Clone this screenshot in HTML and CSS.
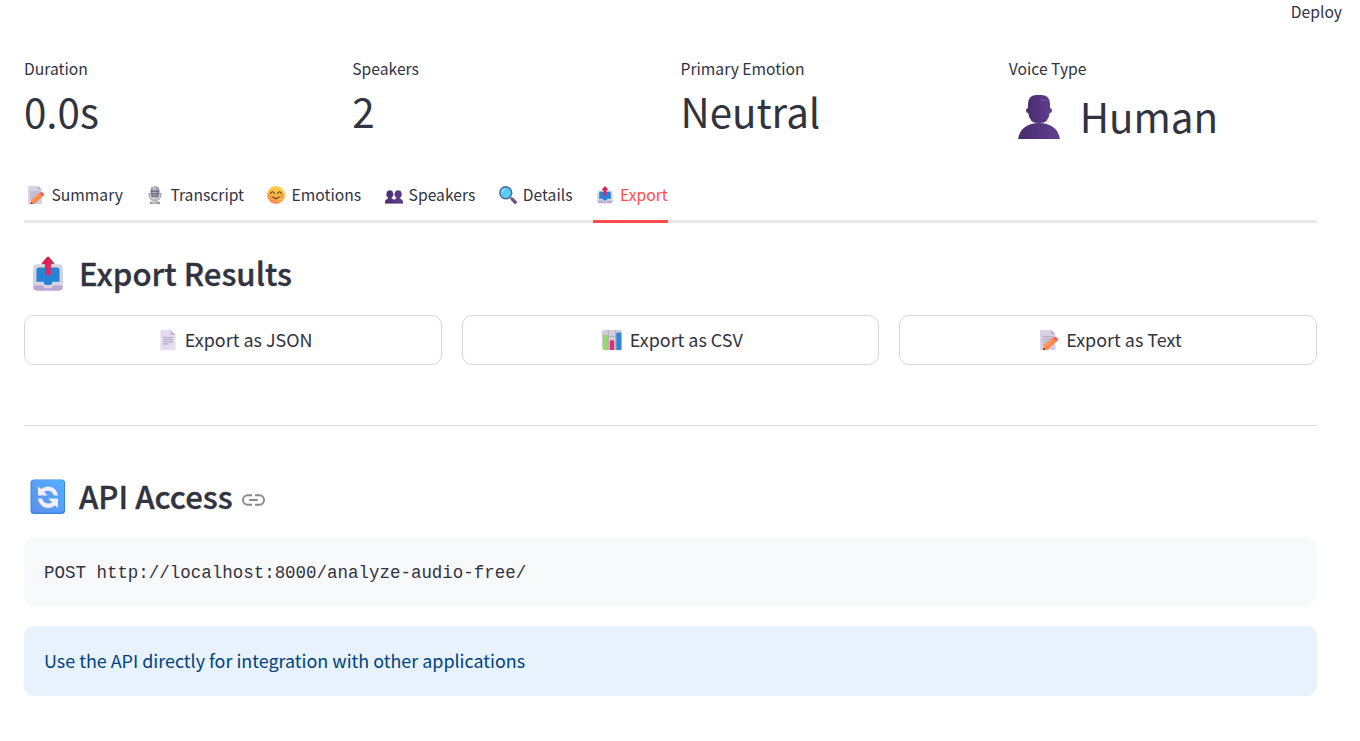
FILE: index.html
```html
<!DOCTYPE html>
<html lang="en">
<head>
<meta charset="utf-8">
<title>Export Results</title>
<link rel="stylesheet" href="styles.css">
</head>
<body>
<svg class="defs" aria-hidden="true">
  <defs>
    <linearGradient id="paper" x1="0" y1="0" x2="1" y2="1"><stop offset="0" stop-color="#d9d5e2"/><stop offset="1" stop-color="#d8c9e9"/></linearGradient>
    <linearGradient id="violet" x1="0" y1="0" x2="1" y2="0"><stop offset="0" stop-color="#482c6c"/><stop offset="1" stop-color="#613f91"/></linearGradient>
    <linearGradient id="face" x1="0.7" y1="0" x2="0.3" y2="1"><stop offset="0" stop-color="#ffd449"/><stop offset="0.6" stop-color="#ffb23f"/><stop offset="1" stop-color="#f68364"/></linearGradient>
    <linearGradient id="mic" x1="0" y1="0" x2="1" y2="0"><stop offset="0" stop-color="#85808e"/><stop offset="0.4" stop-color="#c9c5d0"/><stop offset="1" stop-color="#8b8495"/></linearGradient>
    <linearGradient id="sky" x1="0" y1="1" x2="1" y2="0"><stop offset="0" stop-color="#5a91ed"/><stop offset="1" stop-color="#54afff"/></linearGradient>
    <linearGradient id="arrow" x1="0" y1="0" x2="1" y2="1"><stop offset="0" stop-color="#e2173b"/><stop offset="1" stop-color="#c93b80"/></linearGradient>
    <symbol id="memo" viewBox="0 0 28 28">
      <path d="M1.5 0H17l6 6v22H1.5z" fill="url(#paper)"/><path d="M17 0l6 6h-6z" fill="#b5afc0"/>
      <path d="M5 9.5h14M5 13h14M5 16.5h10M5 20h6" stroke="#aaa3b6" stroke-width="1.4"/>
      <path d="M5.500 28l1.700-6.500L18.500 11.500l5.500 5L12 27.500z" fill="#ff8544"/><path d="M8 24l11-9.500" stroke="#ffa452" stroke-width="2"/>
      <path d="M18.500 11.500l2.900-1.900q1.800-.8 3.900 1.300t1.200 3.700l-2.500 1.900z" fill="#ff6060"/><path d="M5.500 28l.9-3.300 2.800 2.800z" fill="#533558"/>
    </symbol>
    <symbol id="microphone" viewBox="0 0 28 28">
      <path d="M5 11v2.5a9 9 0 0018 0V11" fill="none" stroke="#aaa4b2" stroke-width="2.4"/>
      <path d="M12 20h4v4h4q2 0 2 4H6q0-4 2-4h4z" fill="url(#mic)"/>
      <rect x="7" y="0" width="14" height="20" rx="7" fill="url(#mic)"/>
      <path d="M8 8h12M8 12h12M8.500 15.500h11" stroke="#4f435c" stroke-width="1.400"/>
    </symbol>
    <symbol id="smile" viewBox="0 0 28 28">
      <circle cx="14" cy="14" r="14" fill="url(#face)"/><circle cx="5" cy="16" r="3" fill="#ff814d" opacity=".5"/><circle cx="23" cy="16" r="3" fill="#ff814d" opacity=".5"/>
      <path d="M5.5 11.5q3-5 6 0M16.5 11.5q3-5 6 0M9 17q5 5 10 0" fill="none" stroke="#553b3e" stroke-width="1.8" stroke-linecap="round"/>
    </symbol>
    <symbol id="people" viewBox="0 0 28 28">
      <path d="M0 27q0-6 5-7.2V18q-1.800-1-1.800-3-1.800-1-.5-2.700Q2.500 7 7.500 7t5 5.300Q14 14 12 15q0 2-2 3v1.800q2.500.5 4 2.200 1.500-1.700 4-2.200V18q-2-1-2-3-2-1-.7-2.700Q15.500 7 20.500 7t5 5.300Q27 14 25 15q.2 2-2 3v1.800q5 1.200 5 7.200z" fill="url(#violet)" stroke="#54357e" stroke-width=".8"/>
    </symbol>
    <symbol id="lens" viewBox="0 0 28 28">
      <path d="M17 17l3 3" stroke="#8d8299" stroke-width="3"/><path d="M20.500 20.500l4.700 4.700" stroke="#745085" stroke-width="5.200" stroke-linecap="round"/>
      <circle cx="10.500" cy="10.500" r="9.300" fill="#59cbf2" stroke="#466b96" stroke-width="2.200"/><path d="M4.500 10q.5-4.500 5-5.500" stroke="#8ae5ff" stroke-width="2" fill="none"/>
    </symbol>
    <symbol id="outbox" viewBox="0 0 28 28">
      <path d="M2.500 12h23v12q0 3-3 3h-17q-3 0-3-3z" fill="#bba6d5"/>
      <path d="M5.500 6.500h17q3 0 3 3V23H18q-.5 2-2 2h-4q-1.500 0-2-2H2.500V9.500q0-3 3-3z" fill="#d9d3e1"/>
      <path d="M7 9h14q2 0 2 2v9h-5.500q-.5 2.500-2 2.500h-3q-1.500 0-2-2.500H5v-9q0-2 2-2z" fill="#2584d5"/>
      <path d="M13.200.8q.8-.8 1.600 0L18.500 5q.8 1.500-1 1.500h-1.200V15h-4.600V6.500h-1.200q-1.800 0-1-1.500z" fill="url(#arrow)"/>
    </symbol>
    <symbol id="page" viewBox="0 0 28 28">
      <path d="M3.500 0H17.500l7 7v21h-21z" fill="#e4dbf0"/><path d="M17.500 0l7 7h-7z" fill="#bfb8ca"/>
      <path d="M7 10.500h14M7 13.500h14M7 16.500h14M7 19.500h8" stroke="#aaa1b8" stroke-width="1.300"/>
    </symbol>
    <symbol id="chart" viewBox="0 0 28 28">
      <rect width="28" height="28" rx="2" fill="#d2cdd9"/><path d="M0 9h28M0 18h28M9 0v28M19 0v28" stroke="#aaa2b5" stroke-width="1"/>
      <path d="M1.500 28V8q0-1.500 1.500-1.500h4Q8.500 6.500 8.500 8v20z" fill="#91dc6f"/><path d="M11 28V16q0-1.500 1.500-1.500h3q1.500 0 1.500 1.500v12z" fill="#df2e6d"/><path d="M20 28V5q0-1.500 1.500-1.500h4Q27 3.500 27 5v23z" fill="#3388d5"/>
    </symbol>
    <symbol id="person" viewBox="0 0 44 44">
      <path d="M1 44C3 33 11 28 22 28s19 5 21 16z" fill="url(#violet)"/>
      <path d="M11 10Q11 0 19 0h6q8 0 8 10v3q2 0 2 2.500T32.700 18Q32 28 22 28T11.300 18Q9 18 9 15.500T11 13z" fill="url(#violet)"/>
      <path d="M14 25.500q8 5 16 0" fill="none" stroke="#432665" stroke-width="1" opacity=".4"/><path d="M23 5h6" stroke="#77539f" stroke-width="1.500" opacity=".6"/>
    </symbol>
    <symbol id="refresh" viewBox="0 0 36 36">
      <rect x=".5" y=".5" width="34.500" height="34.500" rx="3.500" fill="#3d83df"/><rect x="1.500" y="1" width="32.500" height="32.500" rx="3" fill="url(#sky)"/>
      <path d="M8 7.500l3 2.500C17 5 26.500 7.500 28 16.500h-4C22.500 12 18 10.500 14 12.800l3.700 3.700H8z" fill="#f4edff"/>
      <path d="M28 29l-3-2.500C19 31.500 9.500 29 8 19.500h4c1.500 4.800 6 6.300 10 4L18.300 19.500H28z" fill="#f4edff"/>
    </symbol>
  </defs>
</svg>
<header class="toolbar">Deploy</header>
<main class="content">
  <section class="metrics">
    <div class="metric"><div class="label">Duration</div><div class="value">0.0s</div></div>
    <div class="metric"><div class="label">Speakers</div><div class="value">2</div></div>
    <div class="metric"><div class="label">Primary Emotion</div><div class="value">Neutral</div></div>
    <div class="metric"><div class="label">Voice Type</div><div class="value voice"><svg class="person"><use href="#person"/></svg><span>Human</span></div></div>
  </section>
  <nav class="tabs">
    <div class="tab"><svg><use href="#memo"/></svg>Summary</div>
    <div class="tab"><svg><use href="#microphone"/></svg>Transcript</div>
    <div class="tab"><svg><use href="#smile"/></svg>Emotions</div>
    <div class="tab"><svg><use href="#people"/></svg>Speakers</div>
    <div class="tab"><svg><use href="#lens"/></svg>Details</div>
    <div class="tab active"><svg><use href="#outbox"/></svg>Export</div>
  </nav>
  <h2 class="heading results"><svg class="emoji"><use href="#outbox"/></svg><span>Export Results</span></h2>
  <div class="buttons">
    <button><svg><use href="#page"/></svg><span>Export as JSON</span></button>
    <button><svg><use href="#chart"/></svg><span>Export as CSV</span></button>
    <button><svg><use href="#memo"/></svg><span>Export as Text</span></button>
  </div>
  <hr>
  <h2 class="heading api"><svg class="emoji"><use href="#refresh"/></svg><span>API Access</span><svg class="link" viewBox="0 0 24 14" fill="none" stroke="#888990" stroke-width="2"><path d="M10.500 2H6a5 5 0 000 10h4.500M13.500 2H18a5 5 0 010 10h-4.500M7.500 7h9"/></svg></h2>
  <pre class="code">POST http://localhost:8000/analyze-audio-free/</pre>
  <div class="info">Use the API directly for integration with other applications</div>
</main>
</body>
</html>
```
FILE: styles.css
```css
* { box-sizing: border-box; }
body {
  margin: 0;
  height: 741px;
  overflow: hidden;
  background: #fff;
  color: #31333f;
  font-family: "Noto Sans CJK SC", "Noto Sans", sans-serif;
  font-size: 15.68px;
}
.defs { position: absolute; width: 0; height: 0; }
svg { flex: none; }
.toolbar { height: 55px; padding-right: 18px; line-height: 24px; text-align: right; }
.content { width: 1293px; margin-left: 24px; }
.metrics { display: grid; grid-template-columns: repeat(4, 1fr); gap: 20px; height: 125px; }
.label { height: 28px; line-height: 28px; }
.value { height: 60px; line-height: 56px; font-size: 40.3px; }
.voice { display: flex; align-items: center; height: 68px; line-height: 66px; }
.voice span { padding-bottom: 2px; }
.person { width: 44px; height: 44px; margin: 0 18.500px 0 8.500px; }
.tabs { display: flex; gap: 20px; height: 43px; border-bottom: 3px solid #e9e9eb; }
.tab { display: flex; align-items: center; height: 43px; padding-bottom: 13px; line-height: 30px; }
.tab svg { width: 18px; height: 18px; margin: 0 6.050px 0 3.450px; }
.active { color: #ff4b4b; border-bottom: 3px solid #ff4b4b; padding-bottom: 10px; }
.heading { display: flex; align-items: center; margin: 0; height: 50px; font-size: 31.15px; font-weight: 500; line-height: 48px; -webkit-text-stroke: 0.35px #31333f; }
.heading span { padding-bottom: 2px; }
.results { margin-top: 26px; }
.heading .emoji { width: 36px; height: 36px; margin: 0 13px 0 6px; }
.heading .link { width: 23px; height: 14px; margin: 5px 0 0 9px; }
.buttons { display: grid; grid-template-columns: repeat(3, 1fr); gap: 20px; margin-top: 16px; }
button { display: flex; align-items: center; justify-content: center; height: 50px; padding: 0; border: 1px solid #d6d6d9; border-radius: 10px; background: #fff; color: inherit; font-family: inherit; font-size: 17.93px; }
button span { padding-bottom: 2px; }
button svg { width: 20px; height: 20px; margin: 0 7.300px 0 4.300px; }
hr { height: 1px; margin: 60px 0 0; border: 0; background: #d6d6d9; }
.api { margin-top: 46px; }
.code { margin: 16px 0 0; height: 68px; padding: 0 20px; border-radius: 10px; background: #f8f9fb; font-family: "Liberation Mono", monospace; font-size: 17.48px; line-height: 70px; }
.info { margin-top: 20px; height: 70px; padding: 0 20px; border-radius: 10px; background: #e8f2fc; color: #004280; font-size: 17.92px; line-height: 68px; }
```
